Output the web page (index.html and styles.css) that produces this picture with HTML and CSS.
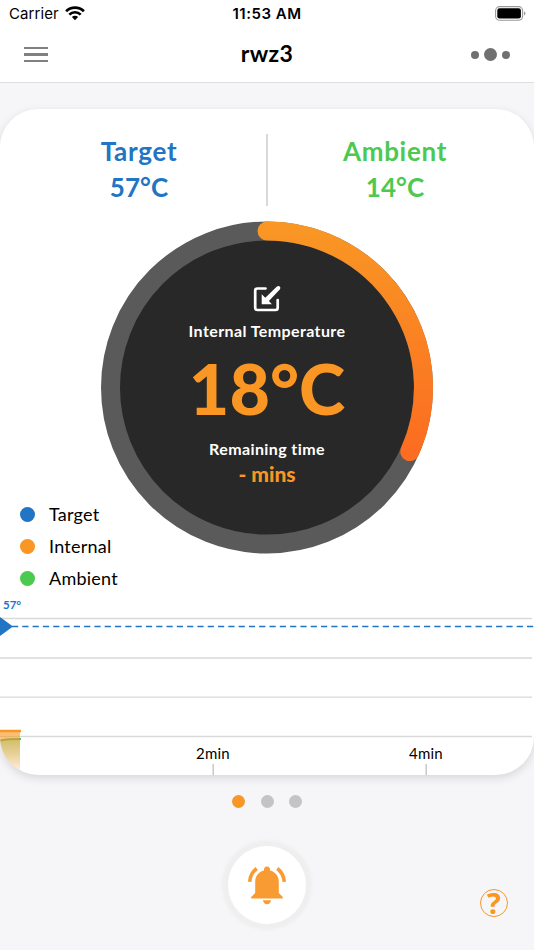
FILE: index.html
```html
<!DOCTYPE html>
<html lang="en">
  <head>
    <meta charset="UTF-8" />
    <meta name="viewport" content="width=device-width, initial-scale=1.0" />
    <title>rwz3</title>
    <link rel="stylesheet" href="styles.css">
  </head>
  <body>
    <header class="header">
      <div class="status-bar">
        <div class="carrier">
          <span>Carrier</span>
          <svg width="20" height="15" viewBox="0 0 20 15">
            <g fill="none" stroke="#000" stroke-width="2.7">
              <path d="M1.1 5.3a12.6 12.6 0 0 1 17.8 0" />
              <path d="M4.3 8.6a8.1 8.1 0 0 1 11.4 0" />
            </g>
            <path d="M10 14.2l-3.1-3.1a4.4 4.4 0 0 1 6.2 0z" />
          </svg>
        </div>
        <span class="clock">11:53 AM</span>
        <svg class="battery" width="32" height="15" viewBox="0 0 32 15">
          <rect x="0.6" y="0.6" width="27" height="13.6" rx="4" fill="none" stroke="#999" stroke-width="1.1" />
          <rect x="2.3" y="2.3" width="23.6" height="10.2" rx="2.2" />
          <path d="M29 5.2q3 2.2 0 4.4z" fill="#999" />
        </svg>
      </div>
      <nav class="nav">
        <button class="menu" aria-label="Menu"><i></i><i></i><i></i></button>
        <h1>rwz3</h1>
        <button class="pager" aria-label="Devices"><i></i><i class="big"></i><i></i></button>
      </nav>
    </header>

    <main class="card">
      <section class="summary">
        <div class="reading target"><span>Target</span><span class="value">57°C</span></div>
        <div class="reading ambient"><span>Ambient</span><span class="value">14°C</span></div>
      </section>

      <section class="gauge">
        <svg class="ring" width="334" height="334" viewBox="0 0 334 334">
          <defs>
            <linearGradient id="heat" x1="0" y1="0" x2="0" y2="1">
              <stop offset="0" stop-color="#f99624" />
              <stop offset="1" stop-color="#fb6d20" />
            </linearGradient>
          </defs>
          <circle cx="167" cy="167.5" r="156.5" fill="#282828" stroke="#5a5a5a" stroke-width="19" />
          <path d="M167 11A156.5 156.5 0 0 1 309.8 231.500" fill="none" stroke="url(#heat)" stroke-width="19" stroke-linecap="round" />
        </svg>
        <div class="gauge-text">
          <svg class="probe" width="28" height="28" viewBox="0 0 28 28">
            <path d="M12.5 4.500H4.400Q2.200 4.500 2.200 6.700v17.100Q2.200 26 4.400 26h18.100q2.200 0 2.200-2.200V16" fill="none" stroke="#fff" stroke-width="2.700" stroke-linecap="round" />
            <path d="M8.700 10.200v10h10.200l-3-3.200L27 5.200q.9-1.700-.2-2.800-1.300-1-2.900.1L12.300 13.700z" fill="#fff" />
          </svg>
          <span class="caption internal-caption">Internal Temperature</span>
          <strong class="temperature">18°C</strong>
          <span class="caption remaining-caption">Remaining time</span>
          <span class="mins">- mins</span>
        </div>
      </section>

      <ul class="legend">
        <li class="target">Target</li>
        <li class="internal">Internal</li>
        <li class="ambient">Ambient</li>
      </ul>

      <svg class="chart" width="534" height="180" viewBox="0 595 534 180">
        <defs>
          <linearGradient id="trace" x1="0" y1="0" x2="0" y2="1">
            <stop offset="0" stop-color="#f99624" stop-opacity=".65" />
            <stop offset="1" stop-color="#f99624" stop-opacity=".12" />
          </linearGradient>
          <linearGradient id="air" x1="0" y1="0" x2="0" y2="1">
            <stop offset="0" stop-color="#8fb544" stop-opacity=".4" />
            <stop offset=".8" stop-color="#8fb544" stop-opacity="0" />
          </linearGradient>
        </defs>
        <g stroke="#d9d9d9" stroke-width="1.3">
          <path d="M0 618.5H532M0 658H532M0 697.2H532M0 736.5H532" />
          <path d="M213.2 764v11M426.2 764v11" stroke="#c8c8c8" stroke-width="1.5" />
        </g>
        <path d="M0 731h20v44H0z" fill="url(#trace)" />
        <path d="M0 741q9-3 20-2v36H0z" fill="url(#air)" />
        <path d="M0 740.5q7-1.500 20-1.500" fill="none" stroke="#b5a63c" stroke-width="2" />
        <path d="M19.500 739H21" stroke="#4cc94f" stroke-width="2" />
        <path d="M0 731h21" stroke="#f99624" stroke-width="2.400" />
        <path d="M12 626.500H534" stroke="#2175c4" stroke-width="1.400" stroke-dasharray="6.200 4.100" />
        <path d="M0 617l13 9.500L0 636z" fill="#2175c4" />
        <text class="goal" x="3" y="609">57°</text>
        <text class="tick" x="213" y="759">2min</text>
        <text class="tick" x="426" y="759">4min</text>
      </svg>
    </main>

    <div class="dots"><i class="active"></i><i></i><i></i></div>

    <footer class="footer">
      <button class="alarm" aria-label="Alarm">
        <svg width="40" height="40" viewBox="0 0 40 40" fill="#f99b33">
          <path d="M20 1.500c2 0 3 1.400 3 3v1c5.400 1.200 8.800 5.800 8.800 11.200V28l4 4.100v1.300H4.200v-1.300l4-4.100V16.700c0-5.400 3.400-10 8.800-11.200v-1c0-1.600 1-3 3-3z" />
          <path d="M16 35.300h8c0 2.300-1.800 4-4 4s-4-1.700-4-4z" />
          <path d="M9.700 3.500C5.400 6.800 3 11.500 2.700 16.800M30.300 3.500c4.300 3.300 6.700 8 7 13.300" fill="none" stroke="#f99b33" stroke-width="3.600" />
        </svg>
      </button>
      <button class="help" aria-label="Help">?</button>
    </footer>
  </body>
</html>
```
FILE: styles.css
```css
* {
  box-sizing: border-box;
}

body {
  margin: 0;
  height: 950px;
  overflow: hidden;
  background: #f6f6f9;
  color: #000;
  font-family: Lato, sans-serif;
  font-variant-ligatures: none;
}

button {
  padding: 0;
  border: none;
  background: none;
}

.header {
  height: 83px;
  background: #fff;
  border-bottom: 1px solid #dedee0;
}

.status-bar {
  display: grid;
  grid-template-columns: 1fr auto 1fr;
  align-items: center;
  height: 27px;
  padding: 0 7px 0 9px;
  font-family: Inter, sans-serif;
  font-size: 15px;
}

.carrier {
  display: flex;
  align-items: center;
  gap: 6px;
  letter-spacing: 0.1px;
}

.clock {
  margin-right: 2px;
  font-weight: 600;
  letter-spacing: 0.5px;
}

.battery {
  justify-self: end;
}

.nav {
  display: grid;
  grid-template-columns: 1fr auto 1fr;
  align-items: center;
  height: 55px;
  padding: 0 24px;
}

.nav h1 {
  margin: -3px 0 0;
  font-size: 23px;
  font-weight: 700;
  letter-spacing: 0.4px;
}

.menu {
  display: flex;
  flex-direction: column;
  gap: 4px;
  width: 24px;
}

.menu i {
  height: 2.5px;
  background: #808080;
}

.pager {
  display: flex;
  align-items: center;
  justify-self: end;
  gap: 5px;
}

.pager i {
  width: 8px;
  height: 8px;
  border-radius: 50%;
  background: #707070;
}

.pager .big {
  width: 13px;
  height: 13px;
}

.card {
  height: 666px;
  margin-top: 26px;
  padding-top: 25px;
  overflow: hidden;
  background: #fff;
  border-radius: 38px;
  box-shadow: 0 3px 10px rgba(0, 0, 0, 0.13);
}

.summary {
  display: grid;
  grid-template-columns: 256px 1fr;
  height: 71px;
  padding: 0 12px;
}

.reading {
  display: flex;
  flex-direction: column;
  align-items: center;
  font-size: 26px;
  font-weight: 700;
  line-height: 36px;
  letter-spacing: 0.7px;
}

.reading span {
  margin-top: -1px;
  margin-bottom: 1px;
}

.reading .value {
  letter-spacing: 0.1px;
}

.reading.target {
  color: #2175c4;
  border-right: 2px solid #d9d9d9;
}

.reading.ambient {
  color: #4cc94f;
}

.gauge {
  display: grid;
  justify-items: center;
  height: 334px;
  margin-top: 15px;
}

.ring,
.gauge-text {
  grid-area: 1 / 1;
}

.gauge-text {
  display: flex;
  flex-direction: column;
  align-items: center;
  z-index: 1;
  padding-top: 64px;
  color: #fff;
}

.caption {
  font-size: 16px;
  font-weight: 700;
  line-height: 20px;
  letter-spacing: 0.4px;
}

.internal-caption {
  margin-top: 9px;
}

.temperature {
  margin-top: 7px;
  color: #f99624;
  font-size: 70px;
  font-weight: 900;
  line-height: 80px;
}

.remaining-caption {
  margin-top: 11px;
}

.mins {
  margin-top: 3px;
  color: #f99624;
  font-size: 21px;
  font-weight: 900;
  line-height: 24px;
}

.legend {
  margin: -56px 0 0;
  padding: 0 0 0 20px;
  list-style: none;
}

.legend li {
  display: flex;
  align-items: center;
  gap: 14px;
  height: 32.2px;
  font-size: 18px;
  letter-spacing: 0.25px;
}

.legend li::before {
  content: "";
  width: 15px;
  height: 15px;
  border-radius: 50%;
}

.legend .target::before {
  background: #2175c4;
}

.legend .internal::before {
  background: #f99624;
}

.legend .ambient::before {
  background: #4cc94f;
}

.chart {
  display: block;
}

.goal {
  fill: #2175c4;
  font-size: 11.5px;
  font-weight: 700;
}

.tick {
  font-size: 15px;
  letter-spacing: 0.2px;
  text-anchor: middle;
}

.dots {
  display: flex;
  justify-content: center;
  gap: 15.3px;
  margin-top: 20px;
}

.dots i {
  width: 13px;
  height: 13px;
  border-radius: 50%;
  background: #c4c4c4;
}

.dots .active {
  background: #f99624;
}

.footer {
  display: grid;
  grid-template-columns: 1fr auto 1fr;
  margin-top: 38px;
  padding-right: 26px;
}

.alarm {
  display: grid;
  grid-column: 2;
  place-items: center;
  width: 78px;
  height: 78px;
  margin-left: 26px;
  border-radius: 50%;
  background: #fff;
  box-shadow: 0 0 3px 6px #efefef;
}

.help {
  justify-self: end;
  width: 28px;
  height: 28px;
  margin-top: 43px;
  border: 1.5px solid #f99624;
  border-radius: 50%;
  color: #f99624;
  font-family: "Open Sans", sans-serif;
  font-size: 29px;
  font-weight: 700;
  line-height: 24px;
}
```
